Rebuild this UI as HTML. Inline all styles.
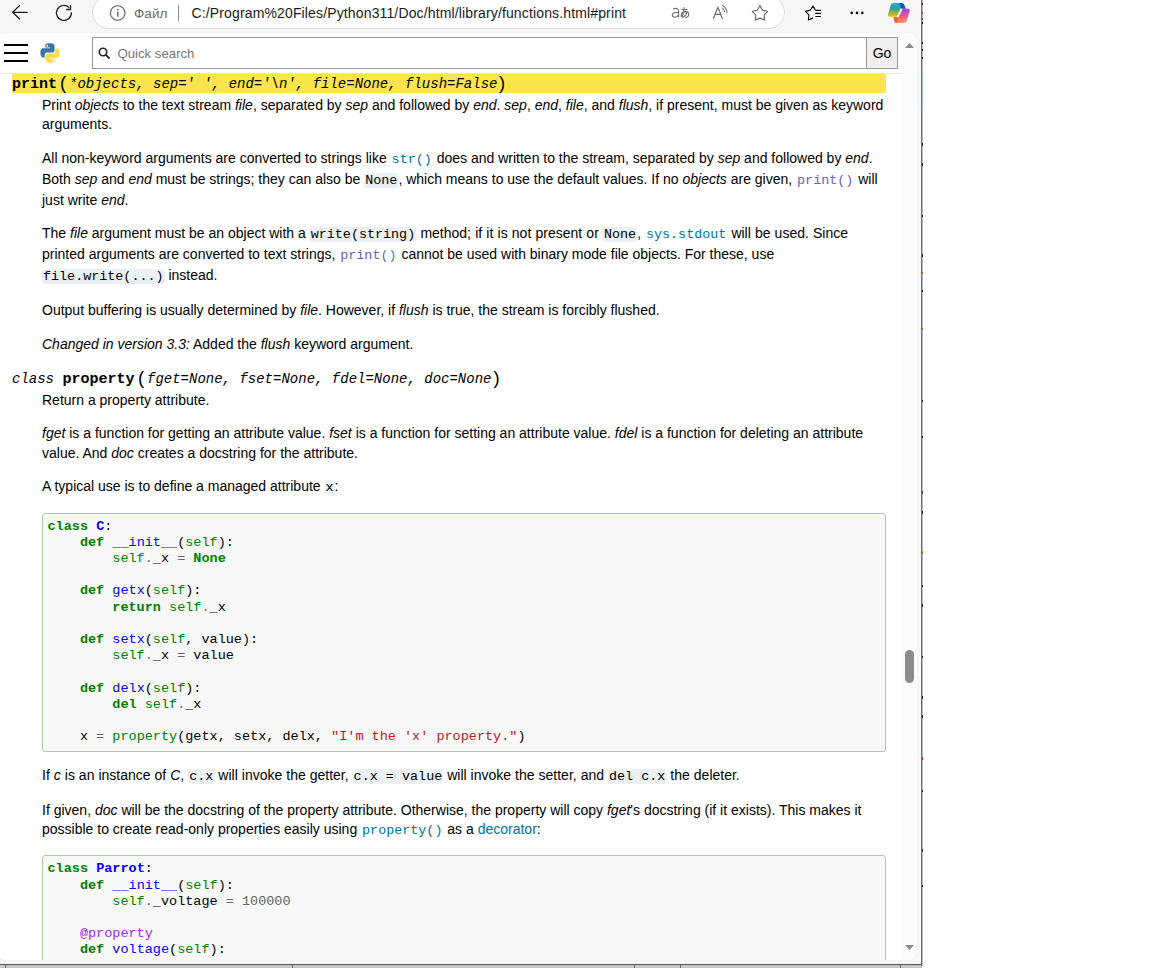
<!DOCTYPE html>
<html><head><meta charset="utf-8">
<style>
*{box-sizing:border-box}
html,body{margin:0;padding:0;width:1152px;height:968px;overflow:hidden;background:#fff}
body{position:relative;font-family:"Liberation Sans", sans-serif;color:#000}
#chrome{position:absolute;left:0;top:0;width:921px;height:968px;background:#f7f7f7}
#page{position:absolute;left:0;top:33px;width:917px;height:927px;background:#fff;border-radius:3px 8px 8px 3px;overflow:hidden;box-shadow:0 0 1px rgba(0,0,0,.18)}
#inner{position:absolute;left:0;top:-33px;width:917px;height:968px}
.ln{position:absolute;white-space:nowrap;font-size:14px;line-height:20px}
.ln i{font-style:italic}
code{font-family:"Liberation Mono", monospace;font-size:13.4px;background:#ecf0f3;padding:0 1px;border-radius:3px;line-height:1}
code.xl{background:transparent;color:#0072aa}
code.xv{background:transparent;color:#6363bb}
.lnk{color:#0072aa}
.pre{position:absolute;left:42px;width:844px;border:1px solid #ac9;background:#f8f8f8;border-radius:3px}
.cl{position:absolute;left:47.5px;white-space:pre;font-family:"Liberation Mono", monospace;font-size:13.5px;line-height:16.2px;color:#000}
.k{color:#008000;font-weight:bold}
.nc{color:#0000ff;font-weight:bold}
.nf{color:#0000ff}
.bp{color:#008000}
.o{color:#666}
.nb{color:#008000}
.s2{color:#ba2121}
.mi{color:#666}
.nd{color:#aa22ff}
.dthl{position:absolute;left:12px;width:874px;background:#fbe54e}
.sig{position:absolute;white-space:pre;font-family:"Liberation Mono", monospace;font-size:14px;line-height:16px;color:#000}
.sig b.dn{font-size:15px}
.paren{position:absolute;font-family:"Liberation Sans", sans-serif;font-size:18.5px;line-height:20px;color:#000}
#hdr{position:absolute;left:0;top:33px;width:902px;height:41px;background:#fff;border-bottom:1px solid #e3e3e3}
.hb{position:absolute;left:4px;width:24px;height:2px;background:#000}
#search{position:absolute;left:92px;top:37px;width:775px;height:32px;border:1px solid #999;background:#fff}
#go{position:absolute;left:866px;top:37px;width:32px;height:32px;border:1px solid #999;background:#efefef;font-size:14px;line-height:30px;text-align:center;color:#000}
#ph{position:absolute;left:117.5px;top:44px;font-size:13.2px;line-height:20px;color:#757575}
#sb{position:absolute;left:902px;top:0;width:15px;height:968px;background:#fbfbfb}
</style></head><body>
<div id="chrome"></div>
<div id="page"><div id="inner">

<div class="dthl" style="top:74px;height:18.5px"></div>
<div class="sig" style="top:75.60px;left:12px"><b class="dn">print</b></div>
<div class="paren" style="top:73px;left:60px">(</div>
<div class="sig" style="top:75.60px;left:69px"><i>*objects, sep=' ', end='\n', file=None, flush=False</i></div>
<div class="paren" style="top:73px;left:499px">)</div>

<div class="sig" style="top:370.90px;left:12px"><i>class </i><b class="dn">property</b></div>
<div class="paren" style="top:368px;left:138px">(</div>
<div class="sig" style="top:370.90px;left:147px"><i>fget=None, fset=None, fdel=None, doc=None</i></div>
<div class="paren" style="top:368px;left:493.5px">)</div>

<div class="ln" style="top:95.05px;left:42px">Print <i>objects</i> to the text stream <i>file</i>, separated by <i>sep</i> and followed by <i>end</i>. <i>sep</i>, <i>end</i>, <i>file</i>, and <i>flush</i>, if present, must be given as keyword</div>
<div class="ln" style="top:113.95px;left:42px">arguments.</div>
<div class="ln" style="top:147.85px;left:42px">All non-keyword arguments are converted to strings like <code class="xl">str()</code> does and written to the stream, separated by <i>sep</i> and followed by <i>end</i>.</div>
<div class="ln" style="top:168.85px;left:42px">Both <i>sep</i> and <i>end</i> must be strings; they can also be <code class="">None</code>, which means to use the default values. If no <i>objects</i> are given, <code class="xv">print()</code> will</div>
<div class="ln" style="top:189.85px;left:42px">just write <i>end</i>.</div>
<div class="ln" style="top:222.95px;left:42px">The <i>file</i> argument must be an object with a <code class="">write(string)</code><span style="word-spacing:0.3px"> method; if it is not present or </span><code class="">None</code>, <code class="xl">sys.stdout</code><span style="word-spacing:0.2px"> will be used. Since</span></div>
<div class="ln" style="top:243.65px;left:42px">printed arguments are converted to text strings, <code class="xv">print()</code> cannot be used with binary mode file objects. For these, use</div>
<div class="ln" style="top:264.95px;left:42px"><code class="">file.write(...)</code> instead.</div>
<div class="ln" style="top:299.95px;left:42px">Output buffering is usually determined by <i>file</i>. However, if <i>flush</i> is true, the stream is forcibly flushed.</div>
<div class="ln" style="top:333.65px;left:42px"><i>Changed in version 3.3:</i> Added the <i>flush</i> keyword argument.</div>
<div class="ln" style="top:389.55px;left:42px">Return a property attribute.</div>
<div class="ln" style="top:423.05px;left:42px"><i>fget</i> is a function for getting an attribute value. <i>fset</i> is a function for setting an attribute value. <i>fdel</i> is a function for deleting an attribute</div>
<div class="ln" style="top:442.65px;left:42px">value. And <i>doc</i> creates a docstring for the attribute.</div>
<div class="ln" style="top:476.35px;left:42px">A typical use is to define a managed attribute <code class="">x</code>:</div>
<div class="ln" style="top:764.65px;left:42px"><span style="word-spacing:0.1px">If <i>c</i> is an instance of <i>C</i>, <code class="">c.x</code> will invoke the getter, <code class="">c.x = value</code> will invoke the setter, and <code class="">del c.x</code> the deleter.</span></div>
<div class="ln" style="top:800.05px;left:42px">If given, <i>doc</i> will be the docstring of the property attribute. Otherwise, the property will copy <i>fget</i>'s docstring (if it exists). This makes it</div>
<div class="ln" style="top:818.95px;left:42px">possible to create read-only properties easily using <code class="xl">property()</code> as a <span class="lnk">decorator</span>:</div>
<div class="pre" style="top:513px;height:239px"></div>
<div class="cl" style="top:518.50px"><span class="k">class</span> <span class="nc">C</span>:</div>
<div class="cl" style="top:534.70px">    <span class="k">def</span> <span class="nf">__init__</span>(<span class="bp">self</span>):</div>
<div class="cl" style="top:550.90px">        <span class="bp">self</span><span class="o">.</span>_x <span class="o">=</span> <span class="k">None</span></div>
<div class="cl" style="top:567.10px"></div>
<div class="cl" style="top:583.30px">    <span class="k">def</span> <span class="nf">getx</span>(<span class="bp">self</span>):</div>
<div class="cl" style="top:599.50px">        <span class="k">return</span> <span class="bp">self</span><span class="o">.</span>_x</div>
<div class="cl" style="top:615.70px"></div>
<div class="cl" style="top:631.90px">    <span class="k">def</span> <span class="nf">setx</span>(<span class="bp">self</span>, value):</div>
<div class="cl" style="top:648.10px">        <span class="bp">self</span><span class="o">.</span>_x <span class="o">=</span> value</div>
<div class="cl" style="top:664.30px"></div>
<div class="cl" style="top:680.50px">    <span class="k">def</span> <span class="nf">delx</span>(<span class="bp">self</span>):</div>
<div class="cl" style="top:696.70px">        <span class="k">del</span> <span class="bp">self</span><span class="o">.</span>_x</div>
<div class="cl" style="top:712.90px"></div>
<div class="cl" style="top:729.10px">    x <span class="o">=</span> <span class="nb">property</span>(getx, setx, delx, <span class="s2">&quot;I&#39;m the &#39;x&#39; property.&quot;</span>)</div>
<div class="pre" style="top:855px;height:246px"></div>
<div class="cl" style="top:861.30px"><span class="k">class</span> <span class="nc">Parrot</span>:</div>
<div class="cl" style="top:877.50px">    <span class="k">def</span> <span class="nf">__init__</span>(<span class="bp">self</span>):</div>
<div class="cl" style="top:893.70px">        <span class="bp">self</span><span class="o">.</span>_voltage <span class="o">=</span> <span class="mi">100000</span></div>
<div class="cl" style="top:909.90px"></div>
<div class="cl" style="top:926.10px">    <span class="nd">@property</span></div>
<div class="cl" style="top:942.30px">    <span class="k">def</span> <span class="nf">voltage</span>(<span class="bp">self</span>):</div>
<div id="hdr"></div>
<div class="hb" style="top:44px"></div><div class="hb" style="top:52px"></div><div class="hb" style="top:60px"></div>
<svg style="position:absolute;left:40px;top:43px" width="20" height="20" viewBox="0 0 110 110">
 <path fill="#3b75a8" d="M54 2c-26 0-25 11-25 11v12h26v4H19S2 27 2 54s15 26 15 26h9V67s0-15 15-15h25s14 0 14-14V16S82 2 54 2zm-14 8a5 5 0 110 10 5 5 0 010-10z"/>
 <path fill="#fdd94f" d="M56 108c26 0 25-11 25-11V85H55v-4h36s17 2 17-25-15-26-15-26h-9v13s0 15-15 15H44s-14 0-14 14v22s-2 14 26 14zm14-8a5 5 0 110-10 5 5 0 010 10z"/>
</svg>
<div id="search"></div>
<svg style="position:absolute;left:98px;top:47px" width="13" height="13" viewBox="0 0 13 13"><circle cx="5" cy="5" r="3.7" fill="none" stroke="#222" stroke-width="1.6"/><path d="M7.7 7.7L11.6 11.6" stroke="#222" stroke-width="1.9"/></svg>
<div id="ph">Quick search</div>
<div id="go">Go</div>
<div id="sb"></div>
<svg style="position:absolute;left:905px;top:43px" width="9" height="5"><path d="M0 5L4.5 0L9 5z" fill="#8a8a8a"/></svg>
<svg style="position:absolute;left:905px;top:945px" width="9" height="5"><path d="M0 0L4.5 5L9 0z" fill="#8a8a8a"/></svg>
<div style="position:absolute;left:905px;top:650px;width:9px;height:33px;border-radius:4.5px;background:#8b8b8b"></div>
</div></div>
<!-- edge toolbar -->
<svg style="position:absolute;left:0;top:0" width="90" height="30">
 <path d="M27.7 12.3H12.3M19.9 5.3L12.6 12.3L19.9 19.3" fill="none" stroke="#1a1a1a" stroke-width="1.2"/>
 <path d="M71.4 12.3A7.5 7.5 0 1 1 69.2 7.6" fill="none" stroke="#1a1a1a" stroke-width="1.2"/>
 <path d="M66.2 9.5H70.5V5.2" fill="none" stroke="#1a1a1a" stroke-width="1.3"/>
</svg>
<div style="position:absolute;left:92px;top:-4px;width:693px;height:32.6px;border-radius:16px;background:#fff;border:1px solid #dcdcdc"></div>
<svg style="position:absolute;left:109px;top:5px" width="18" height="18"><circle cx="8.7" cy="8" r="7.3" fill="none" stroke="#5c5c5c" stroke-width="1.1"/><rect x="8.1" y="6.6" width="1.3" height="5.2" fill="#5c5c5c"/><rect x="8.1" y="4" width="1.3" height="1.4" fill="#5c5c5c"/></svg>
<div style="position:absolute;left:134px;top:4.5px;font-size:13.6px;line-height:18px;color:#6a6a6a">Файл</div>
<div style="position:absolute;left:178px;top:5px;width:1px;height:16px;background:#8a8a8a"></div>
<div style="position:absolute;left:191.5px;top:4px;font-size:14px;line-height:18px;color:#1a1a1a;letter-spacing:0.14px">C:/Program%20Files/Python311/Doc/html/library/functions.html#print</div>
<svg style="position:absolute;left:660px;top:0" width="262" height="30" viewBox="660 0 262 30">
 <path d="M673 9.1Q675.6 7.7 677.6 8.9Q678.6 9.7 678.6 11.5V17.2M678.6 12.6Q676.8 12.3 675.1 12.5Q672.3 13 672.3 15Q672.3 17.2 674.8 17.2Q677.3 17.1 678.6 14.9" fill="none" stroke="#6a6a6a" stroke-width="1.05"/>
 <path d="M681.5 9.5h6M684.3 7.3c-.3 3-1.2 7.5-2.8 10M686.5 11.6c-3.2 0-5.4 1.6-5.4 3.8 0 1.5 1.1 1.9 2.2 1.5 2-.8 3.4-3.5 3.6-5.3M685.5 11.6c2.2 0 3.2 1.3 3.2 2.9 0 1.9-1.6 3-3.6 3.2" fill="none" stroke="#6a6a6a" stroke-width="1.1"/>
 <path d="M713.3 18.8L717.9 7.3L722.5 18.8M715.1 14.3H720.8" fill="none" stroke="#6a6a6a" stroke-width="1.15"/>
 <path d="M722.3 5.2c2.8 1.6 4.6 4.4 4.9 7.8M721.8 7.6c1.6 1 2.6 2.6 2.9 4.5" fill="none" stroke="#6a6a6a" stroke-width="1.05"/>
 <path d="M759.9 5.6L762.5 10.2L767.6 11.3L764.1 15.1L764.6 20.1L759.9 18.1L755.3 20.1L755.8 15.1L752.3 11.3L757.4 10.2Z" fill="none" stroke="#6a6a6a" stroke-width="1.15" stroke-linejoin="round"/>
 <path d="M815.4 10.3L813 6.1L810.3 10.2L805.5 11.3L808.8 14.8L808.5 20L813 17.9M815.4 10.3H820.9M815.3 13.4H820.9M815.3 16.5H820.9" fill="none" stroke="#111" stroke-width="1.2" stroke-linejoin="round"/>
 <circle cx="851.7" cy="12.9" r="1.3" fill="#111"/><circle cx="857" cy="12.9" r="1.3" fill="#111"/><circle cx="862.3" cy="12.9" r="1.3" fill="#111"/>
 <defs>
  <linearGradient id="cg1" x1="0" y1="0" x2="0" y2="1"><stop offset="0" stop-color="#1aa3f0"/><stop offset=".45" stop-color="#3aa08a"/><stop offset="1" stop-color="#f0c800"/></linearGradient>
  <linearGradient id="cg2" x1="0" y1="0" x2="0" y2="1"><stop offset="0" stop-color="#a040e8"/><stop offset=".5" stop-color="#ee5590"/><stop offset="1" stop-color="#ff9a50"/></linearGradient>
 </defs>
 <path d="M893.5 2.9H901.5Q903.2 2.9 904.3 5.5L905.6 8.7H901.3L897.5 16.8H889.8Q887.5 16.8 888 14.3L890.7 5.2Q891.4 2.9 893.5 2.9Z" fill="url(#cg1)"/>
 <path d="M899.5 3H902Q903.6 3 904.5 5.6L905.6 8.7H901Z" fill="#1a4fd0"/>
 <path d="M902.8 8.7H908Q910.2 8.7 909.6 11.1L906.8 20.6Q906.2 22.9 904 22.9H896.7Q895 22.9 894.3 20.4L893.5 17.3H898.2Z" fill="url(#cg2)"/>
 <path d="M893.6 17.2H898.5L896.8 22.9H896.2Q894.7 22.9 894.3 21Z" fill="#f06030"/>
 <path d="M901.6 8.6L897.4 17.1" stroke="#fff" stroke-width="1.7"/>
</svg>
<div style="position:absolute;left:871px;top:964px;width:281px;height:4px;background:#fff"></div>
<div style="position:absolute;left:0;top:964px;width:922px;height:1px;background:#555"></div>
<div style="position:absolute;left:0;top:965px;width:922px;height:3px;background:#c6c6c6"></div><div style="position:absolute;left:5px;top:965px;width:1px;height:3px;background:#6e6e6e"></div><div style="position:absolute;left:292px;top:965px;width:1px;height:3px;background:#6e6e6e"></div><div style="position:absolute;left:634px;top:965px;width:1px;height:3px;background:#6e6e6e"></div><div style="position:absolute;left:680px;top:965px;width:1px;height:3px;background:#6e6e6e"></div><div style="position:absolute;left:900px;top:965px;width:1px;height:3px;background:#6e6e6e"></div>
<div style="position:absolute;left:921px;top:0;width:1px;height:966px;background:#707070"></div><div style="position:absolute;left:922px;top:0;width:1px;height:966px;background:#b8b8b8"></div><div style="position:absolute;left:922px;top:3px;width:1px;height:2px;background:#222"></div><div style="position:absolute;left:922px;top:12px;width:1px;height:2px;background:#c33"></div><div style="position:absolute;left:922px;top:18px;width:1px;height:2px;background:#c33"></div><div style="position:absolute;left:922px;top:22px;width:1px;height:2px;background:#222"></div><div style="position:absolute;left:922px;top:42px;width:1px;height:2px;background:#222"></div><div style="position:absolute;left:922px;top:49px;width:1px;height:2px;background:#222"></div><div style="position:absolute;left:922px;top:57px;width:1px;height:2px;background:#222"></div><div style="position:absolute;left:922px;top:70px;width:1px;height:40px;background:#9fb8d0"></div><div style="position:absolute;left:922px;top:143px;width:1px;height:3px;background:#222"></div><div style="position:absolute;left:922px;top:163px;width:1px;height:3px;background:#222"></div><div style="position:absolute;left:922px;top:215px;width:1px;height:2px;background:#222"></div><div style="position:absolute;left:922px;top:254px;width:1px;height:3px;background:#222"></div><div style="position:absolute;left:922px;top:272px;width:1px;height:2px;background:#c63"></div><div style="position:absolute;left:922px;top:290px;width:1px;height:2px;background:#222"></div><div style="position:absolute;left:922px;top:328px;width:1px;height:2px;background:#c63"></div><div style="position:absolute;left:922px;top:400px;width:1px;height:2px;background:#222"></div><div style="position:absolute;left:922px;top:436px;width:1px;height:2px;background:#222"></div><div style="position:absolute;left:922px;top:491px;width:1px;height:3px;background:#235"></div><div style="position:absolute;left:922px;top:511px;width:1px;height:3px;background:#222"></div><div style="position:absolute;left:922px;top:551px;width:1px;height:3px;background:#c63"></div><div style="position:absolute;left:922px;top:585px;width:1px;height:2px;background:#235"></div><div style="position:absolute;left:922px;top:604px;width:1px;height:3px;background:#222"></div><div style="position:absolute;left:922px;top:656px;width:1px;height:2px;background:#222"></div><div style="position:absolute;left:922px;top:696px;width:1px;height:3px;background:#222"></div><div style="position:absolute;left:922px;top:715px;width:1px;height:3px;background:#222"></div><div style="position:absolute;left:922px;top:757px;width:1px;height:3px;background:#c33"></div><div style="position:absolute;left:922px;top:790px;width:1px;height:2px;background:#222"></div><div style="position:absolute;left:922px;top:849px;width:1px;height:3px;background:#235"></div><div style="position:absolute;left:922px;top:885px;width:1px;height:2px;background:#222"></div>
</body></html>
